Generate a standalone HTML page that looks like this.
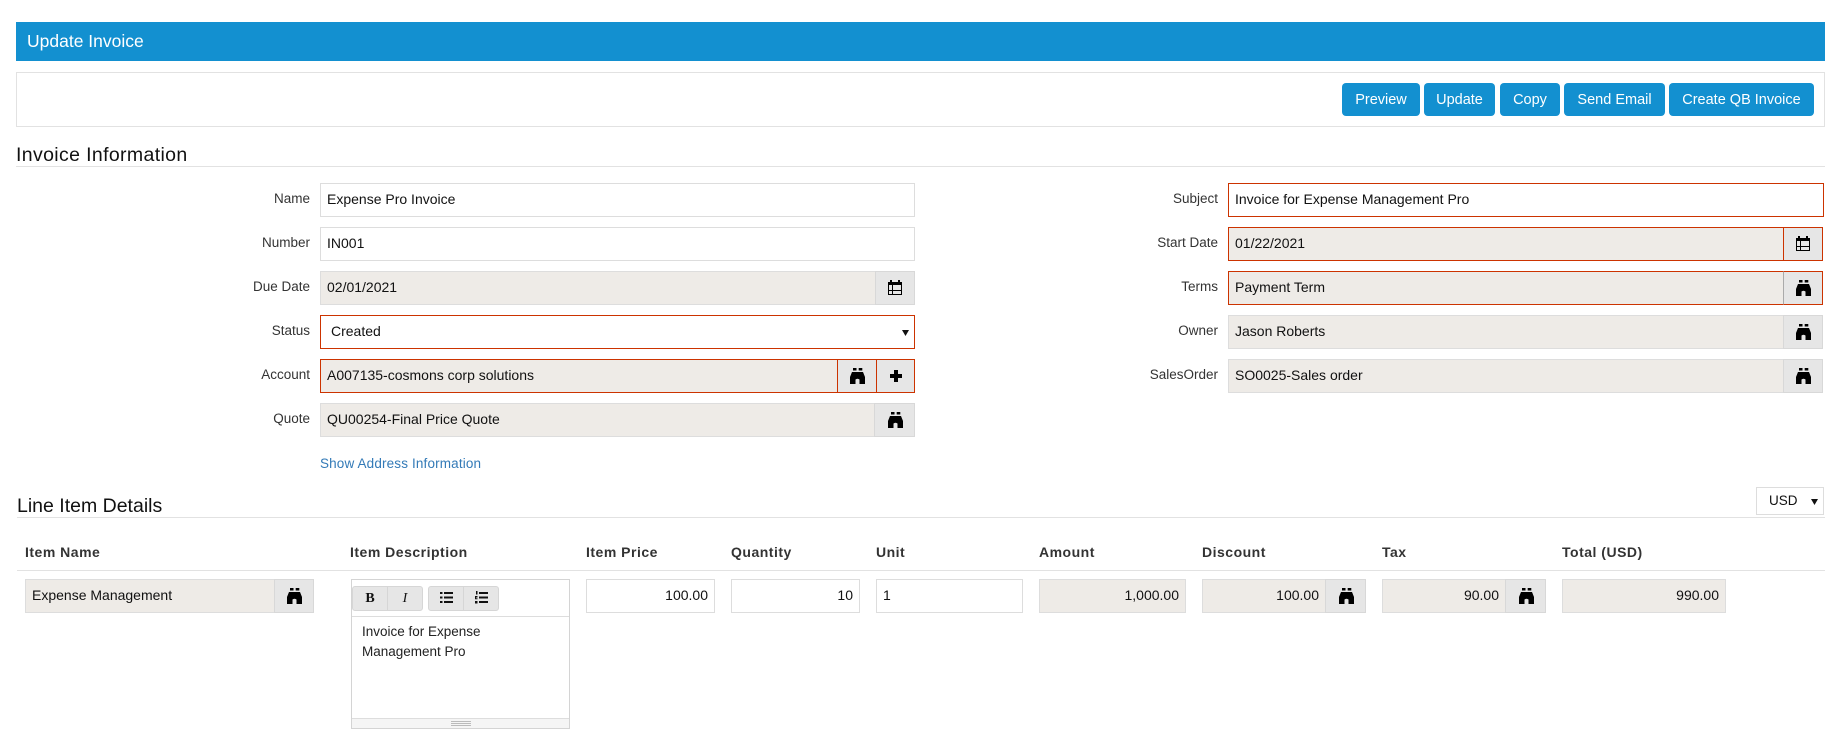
<!DOCTYPE html>
<html>
<head>
<meta charset="utf-8">
<title>Update Invoice</title>
<style>
html,body{margin:0;padding:0;background:#fff;width:1844px;height:746px;overflow:hidden}
body{font-family:"Liberation Sans",sans-serif;color:#111;position:relative}
div,span,a{position:absolute;box-sizing:border-box;white-space:nowrap}
svg{position:absolute;display:block}
.hdr{left:16px;top:22px;width:1809px;height:39px;background:#1390d0;color:#fff;font-size:17.5px;line-height:38px;padding-left:11px}
.bar{left:16px;top:72px;width:1809px;height:55px;border:1px solid #e2e2e2}
.btn{top:83px;height:33px;background:#1390d0;color:#fff;border-radius:4px;font-size:14.5px;line-height:34px;text-align:center}
.sec{font-size:19.5px;line-height:24px;color:#111}
.rule{height:1px;background:#e2e2e2}
.lab{width:200px;height:34px;text-align:right;font-size:13.5px;line-height:34px;color:#333}
.in{height:34px;border:1px solid #ddd;background:#fff;font-size:14px;line-height:30px;padding-left:6px;color:#111}
.ro{background:#eeebe7}
.err{border-color:#cc3300}
.add{top:-1px;width:40px;height:34px;background:#e6e6e6;border:1px solid #d8d8d8}
.err .add{border-color:#cc3300}
.err .g{border-left-color:#aaa}
.add svg{left:12px;top:8px}
.th{top:542px;font-size:14px;line-height:20px;font-weight:bold;color:#333;letter-spacing:.5px}
.rt{text-align:right;padding:0 6px 0 0}
.tb{top:586px;height:25px;background:#e6e6e6;border:1px solid #d6d6d6}
</style>
</head>
<body>
<svg width="0" height="0" style="position:absolute"><defs>
<symbol id="bi" viewBox="0 0 15 16"><path fill="#000" d="M3 0H6.500V2.500H3ZM8.700 0H12.300V2.500H8.700ZM2 4H13L15 9V16H9.500V11.500Q7.500 10 5.500 11.500V16H0V9Z"/></symbol>
<symbol id="ca" viewBox="0 0 14 15"><path fill="#000" d="M2 0H4V2H10V0H12V2H14V5H0V2H2Z"/><path fill="none" stroke="#000" stroke-width="1" d="M.5 4V14.500H13.500V4M.5 10.500H13.500M4.500 5V14.500"/></symbol>
</defs></svg>

<div class="hdr">Update Invoice</div>
<div class="bar"></div>
<div class="btn" style="left:1342px;width:78px">Preview</div>
<div class="btn" style="left:1424px;width:71px">Update</div>
<div class="btn" style="left:1500px;width:60px">Copy</div>
<div class="btn" style="left:1564px;width:101px">Send Email</div>
<div class="btn" style="left:1669px;width:145px">Create QB Invoice</div>

<div class="sec" style="left:16px;top:143px;letter-spacing:.36px">Invoice Information</div>
<div class="rule" style="left:16px;top:166px;width:1809px"></div>

<div class="lab" style="left:110px;top:182px">Name</div>
<div class="in" style="left:320px;top:183px;width:595px">Expense Pro Invoice</div>
<div class="lab" style="left:110px;top:226px">Number</div>
<div class="in" style="left:320px;top:227px;width:595px">IN001</div>
<div class="lab" style="left:110px;top:270px">Due Date</div>
<div class="in ro" style="left:320px;top:271px;width:595px">02/01/2021<div class="add" style="right:-1px"><svg width="14" height="15"><use href="#ca"/></svg></div></div>
<div class="lab" style="left:110px;top:314px">Status</div>
<div class="in err" style="left:320px;top:315px;width:595px;padding-left:10px">Created<svg style="left:581px;top:14px" width="7" height="6"><path d="M0 0H7L3.500 6Z" fill="#111"/></svg></div>
<div class="lab" style="left:110px;top:358px">Account</div>
<div class="in ro err" style="left:320px;top:359px;width:595px">A007135-cosmons corp solutions
<div class="add" style="right:37px"><svg width="15" height="16"><use href="#bi"/></svg></div>
<div class="add" style="right:-1px;width:39px"><svg width="12" height="12" style="left:13px;top:10px"><path d="M4 0H8V4H12V8H8V12H4V8H0V4H4Z" fill="#000"/></svg></div></div>
<div class="lab" style="left:110px;top:402px">Quote</div>
<div class="in ro" style="left:320px;top:403px;width:595px">QU00254-Final Price Quote<div class="add" style="right:-1px;width:41px"><svg style="left:13px" width="15" height="16"><use href="#bi"/></svg></div></div>
<a style="left:320px;top:455px;font-size:13.5px;line-height:18px;color:#337ab7;letter-spacing:.15px">Show Address Information</a>

<div class="lab" style="left:1018px;top:182px">Subject</div>
<div class="in err" style="left:1228px;top:183px;width:596px">Invoice for Expense Management Pro</div>
<div class="lab" style="left:1018px;top:226px">Start Date</div>
<div class="in ro err" style="left:1228px;top:227px;width:595px">01/22/2021<div class="add" style="right:-1px"><svg width="14" height="15"><use href="#ca"/></svg></div></div>
<div class="lab" style="left:1018px;top:270px">Terms</div>
<div class="in ro err" style="left:1228px;top:271px;width:595px">Payment Term<div class="add g" style="right:-1px"><svg width="15" height="16"><use href="#bi"/></svg></div></div>
<div class="lab" style="left:1018px;top:314px">Owner</div>
<div class="in ro" style="left:1228px;top:315px;width:595px">Jason Roberts<div class="add" style="right:-1px"><svg width="15" height="16"><use href="#bi"/></svg></div></div>
<div class="lab" style="left:1018px;top:358px">SalesOrder</div>
<div class="in ro" style="left:1228px;top:359px;width:595px">SO0025-Sales order<div class="add" style="right:-1px"><svg width="15" height="16"><use href="#bi"/></svg></div></div>

<div class="sec" style="left:17px;top:494px">Line Item Details</div>
<div class="rule" style="left:17px;top:517px;width:1808px"></div>
<div class="in" style="left:1756px;top:487px;width:68px;height:28px;line-height:26px;padding-left:12px;font-size:13.500px">USD<svg style="left:54px;top:11px" width="7" height="6"><path d="M0 0H7L3.500 6Z" fill="#111"/></svg></div>

<div class="th" style="left:25px">Item Name</div>
<div class="th" style="left:350px">Item Description</div>
<div class="th" style="left:586px">Item Price</div>
<div class="th" style="left:731px">Quantity</div>
<div class="th" style="left:876px">Unit</div>
<div class="th" style="left:1039px">Amount</div>
<div class="th" style="left:1202px">Discount</div>
<div class="th" style="left:1382px">Tax</div>
<div class="th" style="left:1562px">Total (USD)</div>
<div class="rule" style="left:17px;top:570px;width:1808px"></div>

<div class="in ro" style="left:25px;top:579px;width:289px">Expense Management<div class="add" style="right:-1px"><svg width="15" height="16"><use href="#bi"/></svg></div></div>

<div style="left:351px;top:579px;width:219px;height:150px;border:1px solid #d4d4d4;background:#fff"></div>
<div class="rule" style="left:352px;top:616px;width:217px;background:#ddd"></div>
<div class="tb" style="left:352px;width:36px;border-radius:3px 0 0 3px;font:bold 14px/23px 'Liberation Serif',serif;text-align:center;color:#111">B</div>
<div class="tb" style="left:387px;width:36px;border-radius:0 3px 3px 0;font:italic 14px/23px 'Liberation Serif',serif;text-align:center;color:#111">I</div>
<div class="tb" style="left:428px;width:36px;border-radius:3px 0 0 3px"><svg style="left:11px;top:5px" width="13" height="11"><path d="M0 0H2.500V2H0ZM0 4.500H2.500V6.500H0ZM0 9H2.500V11H0ZM4 0H13V2H4ZM4 4.500H13V6.500H4ZM4 9H13V11H4Z" fill="#111"/></svg></div>
<div class="tb" style="left:463px;width:36px;border-radius:0 3px 3px 0"><svg style="left:11px;top:4px" width="13" height="13"><path d="M1 0H2.500V3.500H1ZM0 5H2.500V6.500H1V7.200H2.500V8.300H0ZM0 10H2.500V12.500H0ZM4 1H13V3H4ZM4 5.500H13V7.500H4ZM4 10H13V12H4Z" fill="#111"/></svg></div>
<div style="left:362px;top:622px;font-size:13.500px;line-height:20px;color:#222">Invoice for Expense<br>Management Pro</div>
<div style="left:352px;top:718px;width:217px;height:10px;background:#f5f5f5;border-top:1px solid #ddd"></div>
<div style="left:451px;top:721px;width:20px;height:5px;border-top:1px solid #bbb;border-bottom:1px solid #bbb"></div>
<div style="left:451px;top:723px;width:20px;height:1px;background:#bbb"></div>

<div class="in rt" style="left:586px;top:579px;width:129px">100.00</div>
<div class="in rt" style="left:731px;top:579px;width:129px">10</div>
<div class="in" style="left:876px;top:579px;width:147px">1</div>
<div class="in ro rt" style="left:1039px;top:579px;width:147px">1,000.00</div>
<div class="in ro rt" style="left:1202px;top:579px;width:164px;padding-right:46px">100.00<div class="add" style="right:-1px;width:41px"><svg style="left:13px" width="15" height="16"><use href="#bi"/></svg></div></div>
<div class="in ro rt" style="left:1382px;top:579px;width:164px;padding-right:46px">90.00<div class="add" style="right:-1px;width:41px"><svg style="left:13px" width="15" height="16"><use href="#bi"/></svg></div></div>
<div class="in ro rt" style="left:1562px;top:579px;width:164px">990.00</div>
</body>
</html>
